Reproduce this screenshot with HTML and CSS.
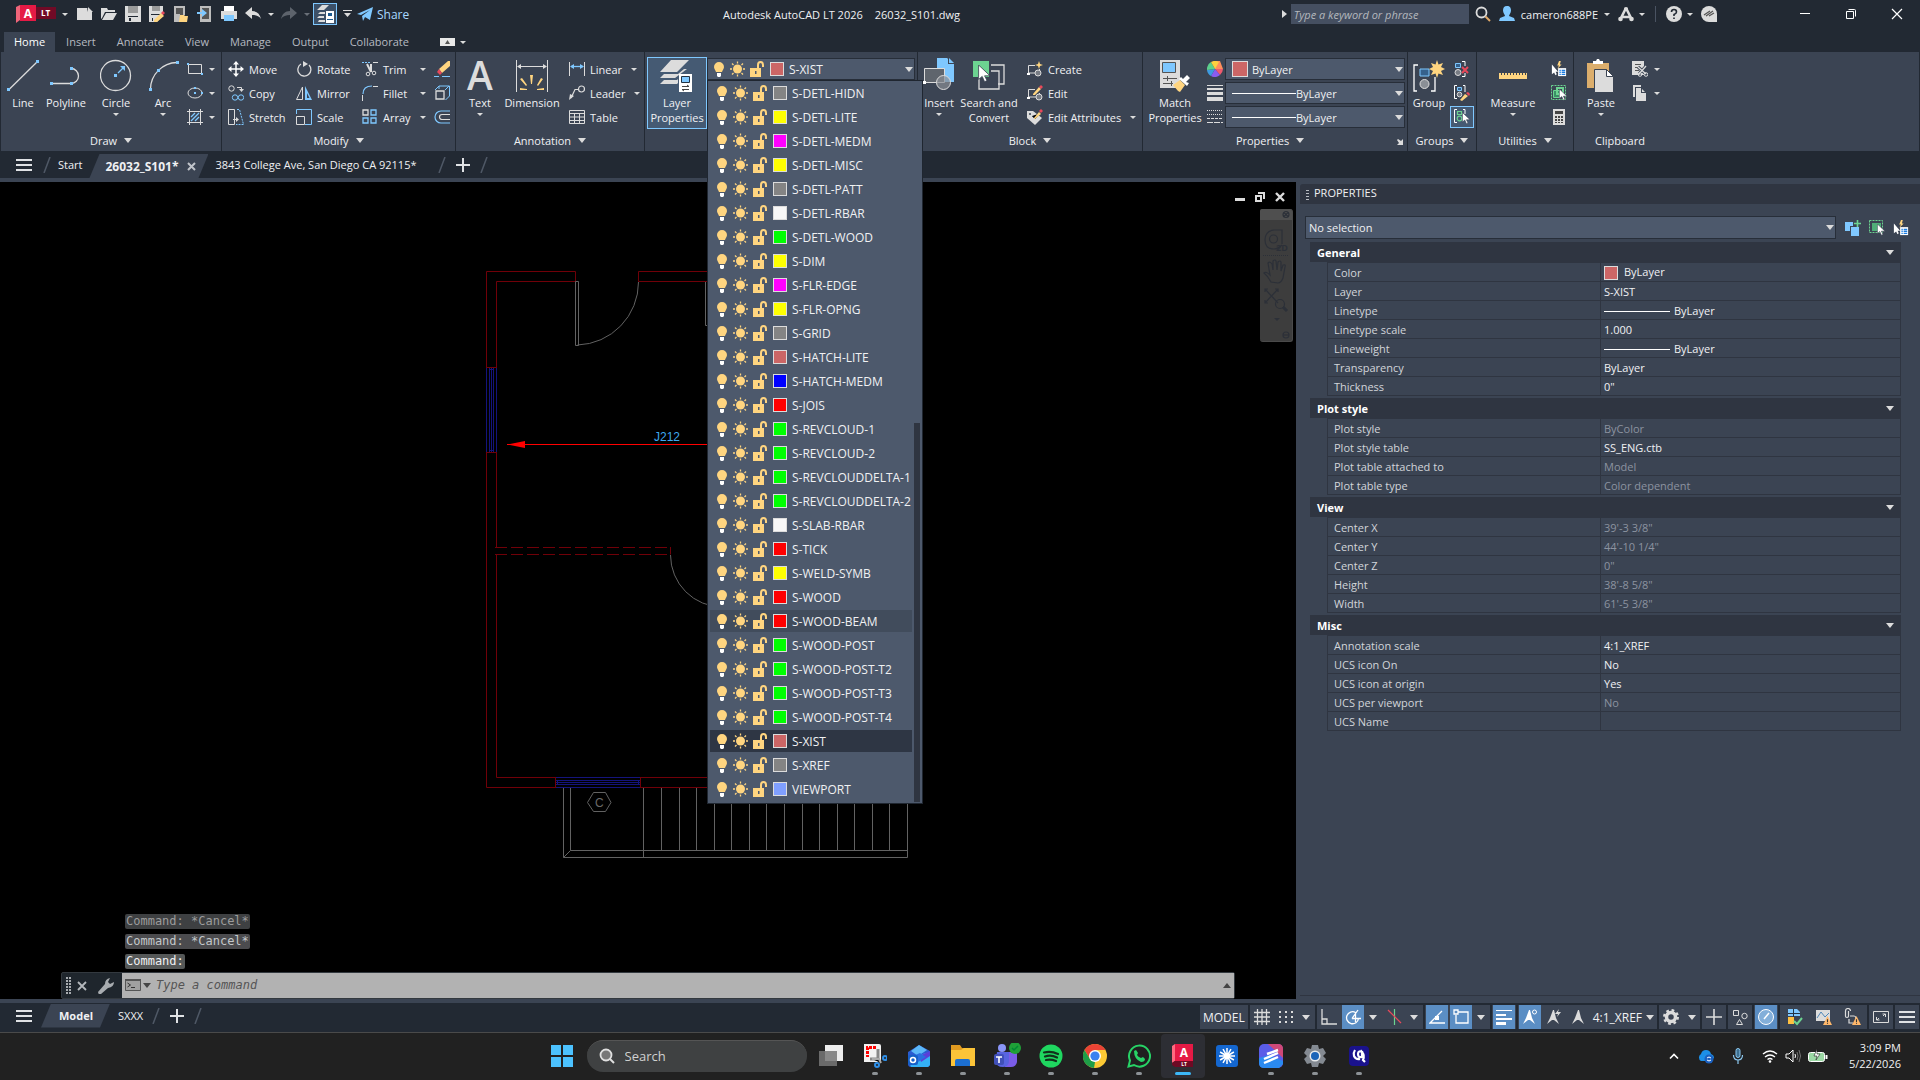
FILE: index.html
```html
<!DOCTYPE html>
<html lang="en">
<head>
<meta charset="utf-8">
<title>Autodesk AutoCAD LT 2026 - 26032_S101.dwg</title>
<meta name="viewport" content="width=device-width, initial-scale=1">
<link rel="stylesheet" href="styles.css">
</head>
<body>
<svg class="defs" aria-hidden="true">
  <symbol id="state" viewBox="0 0 52 18">
    <path fill="#ffd580" d="M7 2a5 5 0 0 0-5 5c0 2 1.500 3 2 5h6c.5-2 2-3 2-5a5 5 0 0 0-5-5z"/><path fill="#fff" d="M5 13h4v3l-1 1H6l-1-1z"/>
    <circle cx="25.500" cy="9" r="4.500" fill="#ffd580"/><path stroke="#ffd580" stroke-width="1.300" d="M25.500 1.500v2M25.500 14.500v2M18 9h2M31 9h2M20 3.500l1.500 1.500M29.500 13l1.500 1.500M31 3.500L29.500 5M21.500 13L20 14.500"/>
    <path fill="#ffd580" d="M38 8h11v9H38z"/><path fill="none" stroke="#ffd580" stroke-width="2" d="M46 8V5q0-3 2.500-3T51 5v2"/><path fill="#4d596c" d="M43 11h1.500v3H43z"/>
  </symbol>
  <symbol id="cursor" viewBox="0 0 10 15"><path fill="#fff" stroke="#3b4453" stroke-width=".7" d="M.5 0v12l3-2.500 2 4.500 2-1-2-4H10z"/></symbol>
  <symbol id="quick" viewBox="0 0 18 18"><path fill="#ffd580" d="M9 0L7 5h2L7 9l5-5h-2l1-4z"/><path fill="#fff" d="M8 8h9v9H8z"/><path stroke="#1c7de0" stroke-width="1.500" d="M9.500 10.500h1.500M12 10.500h4M9.500 12.700h1.500M12 12.700h4M9.500 15h1.500M12 15h4"/><path fill="#fff" d="M1 4v11l2.500-2 1.500 3 1.500-1-1.300-3H8z"/></symbol>
  <symbol id="warn" viewBox="0 0 10 10"><path fill="#ffb86b" d="M5 0l5 10H0z"/><path stroke="#333" stroke-width="1.200" d="M5 3.500V7M5 8v1"/></symbol>
</svg>

<header class="titlebar">
  <div class="quick-access">
    <button class="app-menu" aria-label="Application menu">
      <svg width="42" height="18" viewBox="0 0 42 18"><path fill="#f0657a" d="M0 2l4-2v15l-4 3z"/><path fill="#e51a45" d="M4 0h16v16H4z"/><path fill="#700a26" d="M20 2h20v12H20z"/><text x="12" y="13" text-anchor="middle" class="logo-a">A</text><text x="29.500" y="11" text-anchor="middle" class="logo-lt">LT</text></svg>
      <i class="caret"></i>
    </button>
    <button aria-label="New"><svg width="18" height="18"><path fill="#dcdcdc" d="M1 3h10l5 4v8H1z"/><path fill="#222933" d="M11 3l1 4h4z"/><path fill="#dcdcdc" d="M12 2l5 5h-5z"/></svg></button>
    <button aria-label="Open"><svg width="18" height="18"><path fill="#dcdcdc" d="M1 3h6l1 2h7v2H5l-3 6-1 1zM6 8h11l-4 7H2z"/></svg></button>
    <button aria-label="Save"><svg width="18" height="18"><path fill="#dcdcdc" d="M1 1h16v16H1z"/><path fill="#9a9a9a" d="M4 1h10v7H4z"/><path fill="#222933" d="M4 11h10v1H4zM5 13h2v3H5z"/></svg></button>
    <button aria-label="Save as"><svg width="18" height="18"><path fill="#dcdcdc" d="M1 1h14v9l-6 7H1z"/><path fill="#9a9a9a" d="M4 1h8v5H4z"/><path fill="#222933" d="M3 9h9v1H3zM4 13h1v3H4z"/><path fill="#ffd580" d="M6 15l7-7 3 3-7 6H6z"/><path fill="#e8485a" d="M13 8l2-2 2 2-2 2z"/></svg></button>
    <button aria-label="Open from web and mobile"><svg width="18" height="18"><path fill="#bdbdbd" d="M2 1h11v9H2z"/><path fill="#555" d="M4 3h7v8H4z"/><path fill="#bdbdbd" d="M2 9h6v8H2z"/><path fill="#ffd580" d="M8 10h4l1 1h3l-1 6H7z"/></svg></button>
    <button aria-label="Save to web and mobile"><svg width="18" height="18"><path fill="#bdbdbd" d="M4 1h11v16H4z"/><path fill="#555" d="M6 3h7v11H6z"/><path fill="#7fc8ff" d="M1 7h5V4l5 4-5 4V9H1z"/></svg></button>
    <button aria-label="Plot"><svg width="18" height="18"><path fill="#fff" d="M4 1h10v5H4z"/><path fill="#dcdcdc" d="M1 6h16v8H1z"/><path fill="#7fc8ff" d="M4 10h10v6H4z"/></svg></button>
    <button aria-label="Undo"><svg width="18" height="18"><path fill="#dcdcdc" d="M1 8l7-6v4c5 0 8 3 9 8-2-3-5-4-9-4v4z"/></svg></button>
    <button class="narrow" aria-label="Undo list"><i class="caret"></i></button>
    <button aria-label="Redo"><svg width="18" height="18"><path fill="#5d636c" d="M17 8l-7-6v4C5 6 2 9 1 14c2-3 5-4 9-4v4z"/></svg></button>
    <button class="narrow dim" aria-label="Redo list"><i class="caret"></i></button>
    <button class="on" aria-label="Layer properties"><svg width="18" height="18"><path fill="#dcdcdc" d="M6 0h7L8 5H1zM4 7h5v2H2zM3 11h5v2H1zM3 15h6v2H2z"/><path fill="#fff" d="M10 6h8v12h-8z"/><path fill="#1c5a90" d="M12 8h4v3h-4zM11 14h6v1h-6z"/></svg></button>
    <button class="narrow" aria-label="Customize toolbar"><svg width="9" height="10"><path fill="#dcdcdc" d="M0 1h9v1H0zM1 4h7l-3.500 4z"/></svg></button>
    <button class="share"><svg width="16" height="16"><path fill="#7fc8ff" d="M0 8l16-7-3 13-5-3-2 4-1-5 8-6-9 5z"/></svg><span>Share</span></button>
  </div>
  <h1 class="title"><span>Autodesk AutoCAD LT 2026</span><span>26032_S101.dwg</span></h1>
  <div class="account">
    <i class="caret right"></i>
    <input class="keyword" type="text" aria-label="Search help" placeholder="Type a keyword or phrase">
    <button aria-label="Search"><svg width="16" height="16"><circle cx="6.500" cy="6.500" r="5" fill="none" stroke="#dcdcdc" stroke-width="1.800"/><path stroke="#e0a868" stroke-width="2" d="M10.500 10.500L15 15"/></svg></button>
    <button class="user"><svg width="16" height="16"><path fill="#7fc8ff" d="M8 0c3 0 4 2 4 4.500S10 9 10 10l5 2 1 3H0l1-3 5-2c0-1-2-3-2-5.500S5 0 8 0z"/></svg><span>cameron688PE</span><i class="caret"></i></button>
    <button aria-label="Autodesk App Store"><svg width="16" height="16"><path fill="none" stroke="#dcdcdc" stroke-width="2.600" d="M8 2L2.500 13M8 2l5.500 11M4 11h8"/><circle cx="8" cy="3" r="2" fill="#dcdcdc"/><circle cx="2.500" cy="13" r="2.300" fill="#dcdcdc"/><circle cx="13.500" cy="13" r="2.300" fill="#dcdcdc"/></svg><i class="caret"></i></button>
    <button class="help" aria-label="Help"><svg width="16" height="16"><circle cx="8" cy="8" r="8" fill="#dcdcdc"/><path fill="none" stroke="#222933" stroke-width="1.600" d="M5.500 6q0-2.500 2.500-2.500T10.500 6Q10.500 7.500 8 8.500V10M8 11.500V13"/></svg><i class="caret"></i></button>
    <button aria-label="Assistant"><svg width="16" height="16"><path fill="#dcdcdc" d="M8 0a8 8 0 0 1 8 8v8H8A8 8 0 0 1 8 0z"/><path stroke="#555" stroke-width="1.300" d="M3 9l6-4M5 10l7-5M8 10l5-3"/></svg></button>
    <div class="window-buttons">
      <button aria-label="Minimize"><svg width="12" height="12"><path stroke="#fff" d="M1 5.500h10"/></svg></button>
      <button aria-label="Restore"><svg width="12" height="12"><path fill="none" stroke="#fff" d="M1.500 3.500h7v7h-7zM3.500 1.500h6q1 0 1 1v6"/></svg></button>
      <button aria-label="Close"><svg width="12" height="12"><path stroke="#fff" stroke-width="1.200" d="M1 1l10 10M11 1L1 11"/></svg></button>
    </div>
  </div>
</header>

<nav class="ribbon-tabs">
  <a href="#home" class="active">Home</a><a href="#insert">Insert</a><a href="#annotate">Annotate</a><a href="#view">View</a><a href="#manage">Manage</a><a href="#output">Output</a><a href="#collaborate">Collaborate</a>
  <button class="minimize-ribbon" aria-label="Minimize ribbon"><svg width="15" height="8"><path fill="#e8e8e8" d="M0 0h15v8H0z"/><path fill="#555" d="M5 6l2.500-4L10 6z"/></svg><i class="caret"></i></button>
</nav>

<main>
<section class="ribbon" id="home">
  <div class="panel draw">
    <div class="tools">
      <button class="big w42"><svg width="32" height="36"><path stroke="#dcdcdc" stroke-width="1.300" d="M1.500 33l29-28.500"/><path fill="#7fc8ff" d="M0 31h3v3H0zM29 3h3v3h-3z"/></svg><span>Line</span></button>
      <button class="big w44"><svg width="32" height="36"><path fill="none" stroke="#dcdcdc" stroke-width="1.300" d="M1 26.500h20a7.500 7.500 0 0 0 0-15"/><path fill="#7fc8ff" d="M0 25h3v3H0zM20 25h3v3h-3zM20 10h3v3h-3z"/></svg><span>Polyline</span></button>
      <button class="big w56"><svg width="32" height="36"><circle cx="15.500" cy="18.500" r="15" fill="none" stroke="#dcdcdc" stroke-width="1.300"/><path stroke="#7fc8ff" stroke-width="1.300" d="M18 16l6-6"/><path fill="#7fc8ff" d="M14 17h3v3h-3zM25 9v5l-5-5z"/></svg><span>Circle</span><i class="caret"></i></button>
      <button class="big w38"><svg width="32" height="36"><path fill="none" stroke="#dcdcdc" stroke-width="1.300" d="M3.500 32A27 27 0 0 1 30 5.500"/><path fill="#7fc8ff" d="M2 31h3v3H2zM10 12h3v3h-3zM29 4h3v3h-3z"/></svg><span>Arc</span><i class="caret"></i></button>
      <div class="small-col icons-only">
        <button aria-label="Rectangle"><svg width="16" height="16"><path fill="none" stroke="#dcdcdc" d="M1.500 3.500h13v9h-13z"/><path fill="#7fc8ff" d="M0 2h2v2H0zM14 12h2v2h-2z"/></svg><i class="caret"></i></button>
        <button aria-label="Ellipse"><svg width="16" height="16"><ellipse cx="8" cy="8" rx="7" ry="5" fill="none" stroke="#dcdcdc"/><path fill="#7fc8ff" d="M7 2h2v2H7zM7 7h2v2H7zM14 7h2v2h-2z"/></svg><i class="caret"></i></button>
        <button aria-label="Hatch"><svg width="16" height="16"><path stroke="#dcdcdc" d="M0 2.500h16M0 13.500h16M2.500 0v16M13.500 0v16"/><path stroke="#7fc8ff" stroke-width="1.300" d="M4 8l4-4M4 12l8-8M8 12l4-4"/></svg><i class="caret"></i></button>
      </div>
    </div>
    <div class="caption">Draw<i class="caret wide"></i></div>
  </div>

  <div class="panel modify">
    <div class="tools">
      <div class="small-col w68">
        <button><svg width="16" height="16"><path stroke="#fff" stroke-width="1.500" d="M8 2v12M2 8h12"/><path fill="#fff" d="M8 0l3 3.500H5zM8 16l3-3.500H5zM0 8l3.500-3v6zM16 8l-3.500-3v6z"/></svg>Move</button>
        <button><svg width="16" height="16"><circle cx="3.500" cy="3.500" r="2.700" fill="none" stroke="#dcdcdc"/><path fill="none" stroke="#dcdcdc" d="M9 2.500h4.500V5"/><path fill="#dcdcdc" d="M11 4h5l-2.500 3z"/><g fill="none" stroke="#7fc8ff"><circle cx="7" cy="12.500" r="2.700"/><circle cx="13" cy="12.500" r="2.700"/></g></svg>Copy</button>
        <button><svg width="16" height="16"><path fill="none" stroke="#dcdcdc" d="M.5.500h6v15h-6zM5 10.500h5"/><path fill="#dcdcdc" d="M8 8l3 2.500L8 13z"/><path fill="none" stroke="#7fc8ff" stroke-dasharray="2 1" d="M9 .5h2.500l4 15H8"/></svg>Stretch</button>
      </div>
      <div class="small-col w66">
        <button><svg width="16" height="16"><path fill="none" stroke="#dcdcdc" stroke-width="1.300" d="M5 3a6.500 6.500 0 1 0 8 1"/><path fill="#dcdcdc" d="M7 0l5 3-5 3z"/></svg>Rotate</button>
        <button><svg width="16" height="16"><path fill="none" stroke="#dcdcdc" d="M6.500 2v12.500h-6z"/><path fill="#7fc8ff" d="M9 1l7 14H9z"/><path fill="#3b4453" d="M11 8l2.500 5H11z"/></svg>Mirror</button>
        <button><svg width="16" height="16"><path fill="none" stroke="#7fc8ff" d="M.5 5V.500h15v15H9"/><path fill="none" stroke="#dcdcdc" d="M.5 7.500h8v8h-8z"/></svg>Scale</button>
      </div>
      <div class="small-col w68 split">
        <div><button><svg width="16" height="16"><path stroke="#7fc8ff" stroke-dasharray="2 1" d="M0 1.500h9"/><path stroke="#dcdcdc" d="M11 1.500h5"/><path stroke="#dcdcdc" stroke-width="2" d="M5 3l4 8M9 3v8"/><circle cx="6" cy="13" r="1.800" fill="none" stroke="#dcdcdc"/><circle cx="12" cy="12" r="1.800" fill="none" stroke="#dcdcdc"/></svg>Trim</button><button aria-label="Trim options"><i class="caret"></i></button></div>
        <div><button><svg width="16" height="16"><path fill="none" stroke="#7fc8ff" stroke-width="1.200" d="M1 9q0-8 9-8"/><path stroke="#dcdcdc" d="M11 1.500h5M.5 10v6"/></svg>Fillet</button><button aria-label="Fillet options"><i class="caret"></i></button></div>
        <div><button><svg width="16" height="16"><path fill="none" stroke="#dcdcdc" stroke-width="1.300" d="M1 1h5v5H1z"/><path fill="none" stroke="#7fc8ff" stroke-width="1.300" d="M9 1h5v5H9zM1 9h5v5H1zM9 9h5v5H9z"/></svg>Array</button><button aria-label="Array options"><i class="caret"></i></button></div>
      </div>
      <div class="small-col">
        <button aria-label="Erase"><svg width="16" height="16"><path fill="#ffd580" d="M14 0h2v5l-8 7-3-4z"/><path fill="#e8485a" d="M5 8l3 4-2 2-3-3z"/><path stroke="#7fc8ff" d="M0 15.500h5M8 15.500h8"/></svg></button>
        <button aria-label="Explode"><svg width="16" height="16"><path fill="none" stroke="#7fc8ff" d="M1 5l4-4h10.500v10l-4 4M5 1v3M11 5l4-4"/><path fill="none" stroke="#dcdcdc" stroke-width="1.300" d="M2 6h8v8H2z"/></svg></button>
        <button aria-label="Offset"><svg width="16" height="16"><path fill="none" stroke="#7fc8ff" stroke-width="1.200" d="M16 2H7a6 6 0 0 0 0 12h9"/><path fill="none" stroke="#dcdcdc" stroke-width="1.200" d="M16 5.500H8a2.500 2.500 0 0 0 0 5h8"/></svg></button>
      </div>
    </div>
    <div class="caption">Modify<i class="caret wide"></i></div>
  </div>

  <div class="panel annotation">
    <div class="tools">
      <button class="big w40"><svg width="32" height="36"><text x="16" y="33" text-anchor="middle" class="icon-a">A</text></svg><span>Text</span><i class="caret"></i></button>
      <button class="big w64"><svg width="32" height="36"><path stroke="#dcdcdc" d="M.5 3v32M31.500 3v32M2 9.500h28"/><path fill="#dcdcdc" d="M1 9.500L5 7v5zM31 9.500L27 7v5z"/><path fill="#ffd580" d="M14 18h3l-1 9h-1zM4 22l2-1 5 7-1 1zM27 22l-2-1-4 7 1 1zM4 31l7 1v1H4zM28 31l-7 1v1h7z"/></svg><span>Dimension</span></button>
      <div class="small-col">
        <div><button><svg width="16" height="16"><path stroke="#dcdcdc" d="M.5 1v14M15.500 1v14"/><path stroke="#7fc8ff" stroke-width="1.300" d="M2 5.500h12"/><path fill="#7fc8ff" d="M1 5.500L5 3v5zM15 5.500L11 3v5z"/></svg>Linear</button><button class="opt" aria-label="Linear options"><i class="caret"></i></button></div>
        <div><button><svg width="16" height="16"><circle cx="12.500" cy="4" r="3" fill="none" stroke="#dcdcdc" stroke-width="1.200"/><path fill="none" stroke="#dcdcdc" stroke-width="1.200" d="M9.500 4.500H6L2 13"/><path fill="#dcdcdc" d="M0 15l1-6 4 2z"/></svg>Leader</button><button class="opt" aria-label="Leader options"><i class="caret"></i></button></div>
        <button><svg width="16" height="16"><path fill="none" stroke="#dcdcdc" d="M.5 1.500h15v13H.5zM0 4.500h16M0 8h16M0 11.500h16M5.500 4v10M10.500 4v10"/></svg>Table</button>
      </div>
    </div>
    <div class="caption">Annotation<i class="caret wide"></i></div>
  </div>

  <div class="panel layers">
    <div class="tools">
      <button class="big pressed"><svg width="34" height="36"><path fill="#dcdcdc" d="M11 2h18L17 14H0zM4 16h14l6-5h3L15 20H0zM4 22h13l1-1v4l-1 1H0z"/><path fill="#fff" d="M19 16h13v18H19z"/><path fill="#7fc8ff" stroke="#234" d="M21.500 18.500h8v6h-8z"/><path fill="none" stroke="#444" d="M22 28.500h7l-2-1.500M29 31.500h-7l2 1.500"/></svg><span>Layer<br>Properties</span></button>
      <div class="layer-picker">
        <div class="combo"><svg class="state"><use href="#state"/></svg><i class="swatch rose"></i><select aria-label="Current layer"><option>S-XIST</option></select><i class="caret wide"></i></div>
        <ul class="layer-menu" aria-label="Layers">
          <li><svg class="state"><use href="#state"/></svg><i class="swatch gray"></i>S-DETL-HIDN</li>
          <li><svg class="state"><use href="#state"/></svg><i class="swatch yellow"></i>S-DETL-LITE</li>
          <li><svg class="state"><use href="#state"/></svg><i class="swatch magenta"></i>S-DETL-MEDM</li>
          <li><svg class="state"><use href="#state"/></svg><i class="swatch yellow"></i>S-DETL-MISC</li>
          <li><svg class="state"><use href="#state"/></svg><i class="swatch gray"></i>S-DETL-PATT</li>
          <li><svg class="state"><use href="#state"/></svg><i class="swatch white"></i>S-DETL-RBAR</li>
          <li><svg class="state"><use href="#state"/></svg><i class="swatch green"></i>S-DETL-WOOD</li>
          <li><svg class="state"><use href="#state"/></svg><i class="swatch yellow"></i>S-DIM</li>
          <li><svg class="state"><use href="#state"/></svg><i class="swatch magenta"></i>S-FLR-EDGE</li>
          <li><svg class="state"><use href="#state"/></svg><i class="swatch yellow"></i>S-FLR-OPNG</li>
          <li><svg class="state"><use href="#state"/></svg><i class="swatch gray"></i>S-GRID</li>
          <li><svg class="state"><use href="#state"/></svg><i class="swatch rose"></i>S-HATCH-LITE</li>
          <li><svg class="state"><use href="#state"/></svg><i class="swatch blue"></i>S-HATCH-MEDM</li>
          <li><svg class="state"><use href="#state"/></svg><i class="swatch red"></i>S-JOIS</li>
          <li><svg class="state"><use href="#state"/></svg><i class="swatch green"></i>S-REVCLOUD-1</li>
          <li><svg class="state"><use href="#state"/></svg><i class="swatch green"></i>S-REVCLOUD-2</li>
          <li><svg class="state"><use href="#state"/></svg><i class="swatch green"></i>S-REVCLOUDDELTA-1</li>
          <li><svg class="state"><use href="#state"/></svg><i class="swatch green"></i>S-REVCLOUDDELTA-2</li>
          <li><svg class="state"><use href="#state"/></svg><i class="swatch white"></i>S-SLAB-RBAR</li>
          <li><svg class="state"><use href="#state"/></svg><i class="swatch red"></i>S-TICK</li>
          <li><svg class="state"><use href="#state"/></svg><i class="swatch yellow"></i>S-WELD-SYMB</li>
          <li><svg class="state"><use href="#state"/></svg><i class="swatch red"></i>S-WOOD</li>
          <li class="hover"><svg class="state"><use href="#state"/></svg><i class="swatch red"></i>S-WOOD-BEAM</li>
          <li><svg class="state"><use href="#state"/></svg><i class="swatch green"></i>S-WOOD-POST</li>
          <li><svg class="state"><use href="#state"/></svg><i class="swatch green"></i>S-WOOD-POST-T2</li>
          <li><svg class="state"><use href="#state"/></svg><i class="swatch green"></i>S-WOOD-POST-T3</li>
          <li><svg class="state"><use href="#state"/></svg><i class="swatch green"></i>S-WOOD-POST-T4</li>
          <li class="current"><svg class="state"><use href="#state"/></svg><i class="swatch rose"></i>S-XIST</li>
          <li><svg class="state"><use href="#state"/></svg><i class="swatch gray"></i>S-XREF</li>
          <li><svg class="state"><use href="#state"/></svg><i class="swatch periwinkle"></i>VIEWPORT</li>
        </ul>
      </div>
    </div>
  </div>

  <div class="panel block">
    <div class="tools">
      <button class="big w40"><svg width="32" height="36"><path fill="#7fc8ff" d="M14 1h10l7 6v18H14z"/><path fill="#3b4453" d="M25 0h7v7h-7z"/><path fill="#7fc8ff" d="M26 1l5 5h-5z"/><path fill="#5f656d" stroke="#dcdcdc" d="M1.500 11.500h20v14h-20z"/><circle cx="20.500" cy="25.500" r="7" fill="#8a8f96" fill-opacity=".7" stroke="#dcdcdc"/><path fill="#fff" d="M0 24h3v3H0z"/></svg><span>Insert</span><i class="caret"></i></button>
      <button class="big w60"><svg width="32" height="36"><path fill="none" stroke="#dcdcdc" stroke-width="1.300" d="M18 8h13v19h-6M6 20v12h20V14h-8"/><path fill="#6cd391" d="M0 4h16v16H0z"/><use href="#cursor" x="5" y="8" width="12" height="18"/></svg><span>Search and<br>Convert</span></button>
      <div class="small-col">
        <button><svg width="16" height="16"><path fill="none" stroke="#dcdcdc" d="M12.500 8v4h-11V4.500H8"/><circle cx="11" cy="12" r="3" fill="#777c84" stroke="#dcdcdc"/><path fill="#fff" d="M0 12h3v2H0z"/><path fill="#ffd580" d="M12 0l1 3 3 1-3 1-1 3-1-3-3-1 3-1z"/></svg>Create</button>
        <button><svg width="16" height="16"><path fill="none" stroke="#dcdcdc" d="M12.500 8v4h-11V4.500H8"/><circle cx="12" cy="12" r="3" fill="#777c84" stroke="#dcdcdc"/><path fill="#fff" d="M0 12h3v2H0z"/><path fill="#ffd580" d="M6 9l6-7 2 2-6 6H6z"/><path fill="#e8485a" d="M12 2l2-2 2 2-2 2z"/></svg>Edit</button>
        <div><button><svg width="16" height="16"><path fill="#dcdcdc" d="M0 2h6l9 7-7 7-8-7z"/><circle cx="3" cy="5" r="1" fill="#3b4453"/><path stroke="#3b4453" d="M5 7l3 3 6-6"/><path fill="#ffd580" d="M7 9l5-6 2 2-6 5H7z"/><path fill="#e8485a" d="M12 2l2-2 2 2-2 2z"/></svg>Edit Attributes</button><button class="opt" aria-label="Edit attributes options"><i class="caret"></i></button></div>
      </div>
    </div>
    <div class="caption">Block<i class="caret wide"></i></div>
  </div>

  <div class="panel props">
    <div class="tools">
      <button class="big w56"><svg width="32" height="36"><path fill="#dcdcdc" d="M1 3h20v28H1z"/><path fill="#7fc8ff" stroke="#555" d="M3.500 5.500h13v10h-13z"/><path stroke="#555" d="M4 21.500h14M4 26.500h10M8.500 19v5M12.500 24v5"/><path fill="#ffd580" d="M14 28l7-5 5 5-5 7-2-1z"/><path fill="#fff" d="M20 22l2-2 2 2 4-4 3 3-4 4 3 1-2 3z"/></svg><span>Match<br>Properties</span></button>
      <div class="small-col">
        <button aria-label="Color"><svg width="16" height="16"><path fill="#ffc04d" d="M8 8V0l6 3z"/><path fill="#ff8e5c" d="M8 8V0h5l3 8z"/><path fill="#f05a6e" d="M8 8h8a8 8 0 0 1-3 6z"/><path fill="#8a5cf0" d="M8 8l5 6a8 8 0 0 1-9 1z"/><path fill="#3d9be0" d="M8 8l-4 7a8 8 0 0 1-4-6z"/><path fill="#5cd08c" d="M8 8L0 9a8 8 0 0 1 4-8z"/><path fill="#ffd040" d="M8 8L4 1a8 8 0 0 1 8 0z"/></svg></button>
        <button aria-label="Lineweight"><svg width="16" height="16"><path fill="#dcdcdc" d="M0 0h16v1H0zM0 3h16v2H0zM0 7h16v3H0zM0 12h16v4H0z"/></svg></button>
        <button aria-label="Linetype"><svg width="16" height="16"><path stroke="#dcdcdc" stroke-dasharray="1 1" d="M0 1.500h16M0 5.500h16"/><path stroke="#dcdcdc" stroke-dasharray="3 1" d="M0 9.500h16"/><path stroke="#dcdcdc" stroke-dasharray="6 1" d="M0 13.500h16"/></svg></button>
      </div>
      <div class="combos">
        <div class="combo"><i class="swatch big-swatch rose"></i><select aria-label="Object color"><option>ByLayer</option></select><i class="caret wide"></i></div>
        <div class="combo"><i class="sample"></i><select aria-label="Lineweight"><option>ByLayer</option></select><i class="caret wide"></i></div>
        <div class="combo"><i class="sample"></i><select aria-label="Linetype"><option>ByLayer</option></select><i class="caret wide"></i></div>
      </div>
    </div>
    <div class="caption">Properties<i class="caret wide"></i><button class="launcher" aria-label="Properties palette"><svg width="6" height="6"><path fill="#dcdcdc" d="M6 0v6H0l2-2-2-3 1-1 3 2z"/></svg></button></div>
  </div>

  <div class="panel groups">
    <div class="tools">
      <button class="big w38"><svg width="32" height="36"><path fill="none" stroke="#fff" stroke-width="1.300" d="M5 8H1v26h3M18 34h4V20"/><path fill="#35618c" stroke="#7fc8ff" d="M7 12h9v7H7z"/><circle cx="11.500" cy="27" r="4.500" fill="#8a8f96" stroke="#dcdcdc"/><path fill="#ffd580" d="M24 3l1.500 4.500L30 6l-2 4 4 2-4 2 2 4-4.500-1.500L24 21l-1.500-4.500L18 18l2-4-4-2 4-2-2-4 4.500 1.500z"/></svg><span>Group</span></button>
      <div class="small-col w24">
        <button aria-label="Ungroup"><svg width="16" height="16"><path fill="#35618c" stroke="#7fc8ff" d="M1.500 2.500h5v4h-5z"/><circle cx="4" cy="11.500" r="3" fill="#777c84" stroke="#dcdcdc"/><path fill="none" stroke="#fff" d="M8 .5h3V5M11 12v3.500H8"/><path stroke="#e8485a" stroke-width="2" d="M8 6l6 6M14 6l-6 6"/></svg></button>
        <button aria-label="Group edit"><svg width="16" height="16"><path fill="none" stroke="#fff" d="M3 .5H.5v13H3M9 .5h2V7"/><path fill="#35618c" stroke="#7fc8ff" d="M3.500 2.500h4v3h-4z"/><circle cx="5.500" cy="9.500" r="2.300" fill="#777c84" stroke="#dcdcdc"/><path fill="#ffd580" d="M6 15l5-6 3 2-6 5z"/><path fill="#e8485a" d="M12 8l2-1 2 2-1 2z"/></svg></button>
        <button class="on" aria-label="Group selection on/off"><svg width="16" height="16"><path fill="none" stroke="#fff" d="M3 .5H.5v13H3M9 .5h2V5"/><path fill="none" stroke="#6cd391" stroke-width="1.200" d="M3.500 2.500h4v3h-4z"/><circle cx="5.500" cy="9.500" r="2.300" fill="none" stroke="#6cd391" stroke-width="1.200"/><use href="#cursor" x="8" y="3" width="8" height="13"/></svg></button>
      </div>
    </div>
    <div class="caption">Groups<i class="caret wide"></i></div>
  </div>

  <div class="panel utilities">
    <div class="tools">
      <button class="big w64"><svg width="32" height="36"><path fill="#ffd580" d="M2 16h28v6H2z"/><path stroke="#3b4453" d="M4.500 16v2M7.500 16v2M10.500 16v2M13.500 16v2M16.500 16v2M19.500 16v2M22.500 16v2M25.500 16v2M28.500 16v2"/></svg><span>Measure</span><i class="caret"></i></button>
      <div class="small-col">
        <button aria-label="Quick select"><svg width="16" height="16"><use href="#quick" width="16" height="16"/></svg></button>
        <button aria-label="Select all"><svg width="16" height="16"><path fill="none" stroke="#6cd391" stroke-dasharray="2 1" d="M.5.500h14v14H.5z"/><path fill="#3b8f66" stroke="#6cd391" d="M2.500 5.500h6v7h-6z"/><path fill="none" stroke="#6cd391" stroke-width="2" d="M6 3v6h6V3z"/><use href="#cursor" x="8" y="4" width="8" height="12"/></svg></button>
        <button aria-label="Quick calculator"><svg width="16" height="16"><path fill="#dcdcdc" d="M2 0h12v16H2z"/><path fill="#444" d="M4 2h8v3H4zM4 7h2v2H4zM7 7h2v2H7zM10 7h2v2h-2zM4 10h2v2H4zM7 10h2v2H7zM10 10h2v2h-2zM4 13h2v1H4zM7 13h2v1H7zM10 13h2v1h-2z"/></svg></button>
      </div>
    </div>
    <div class="caption">Utilities<i class="caret wide"></i></div>
  </div>

  <div class="panel clipboard">
    <div class="tools">
      <button class="big w44"><svg width="32" height="36"><path fill="#dcae6c" d="M2 6h22v25H2z"/><path fill="#fff" d="M8 7V4h3l1-2h2l1 2h3v3z"/><path fill="#dcdcdc" stroke="#3b4453" d="M9.500 12.500h12l7 7v16h-19z"/><path fill="#fff" stroke="#3b4453" d="M21.500 12.500l7 7h-7z"/></svg><span>Paste</span><i class="caret"></i></button>
      <div class="small-col icons-only">
        <button aria-label="Cut"><svg width="16" height="16"><path fill="#dcdcdc" d="M0 0h12v14H0z"/><path stroke="#555" d="M3 3.500h6M3 6.500h5M3 9.500h4"/><path stroke="#3b4453" stroke-width="3" d="M6 6l8 7M14 5l-7 8"/><path stroke="#dcdcdc" stroke-width="1.300" d="M6 6l8 7M14 5l-7 8"/><g fill="none" stroke="#dcdcdc"><circle cx="8" cy="13.500" r="1.800"/><circle cx="14" cy="13.500" r="1.800"/></g></svg><i class="caret"></i></button>
        <button aria-label="Copy clip"><svg width="16" height="16"><path fill="#dcdcdc" d="M1 0h8v2H3v10H1z"/><path fill="#dcdcdc" d="M4 3h5l5 5v8H4z"/><path fill="#3b4453" d="M9 2v6h5V7h-4V2z"/></svg><i class="caret"></i></button>
      </div>
    </div>
    <div class="caption">Clipboard</div>
  </div>
</section>

<nav class="file-tabs">
  <button class="menu" aria-label="File tab menu"><i></i></button><svg class="slash" width="8" height="16"><path stroke="#4f5866" stroke-width="1.500" d="M1 16L7 0"/></svg>
  <a href="#start" class="start">Start</a>
  <span class="file active"><a href="#s101">26032_S101*</a><button aria-label="Close tab"><svg width="9" height="9"><path stroke="#c0c4ca" stroke-width="2" d="M1 1l7 7M8 1L1 8"/></svg></button></span>
  <a href="#college" class="file">3843 College Ave, San Diego CA 92115*</a>
  <svg class="slash" width="8" height="16"><path stroke="#4f5866" stroke-width="1.500" d="M1 16L7 0"/></svg><button class="plus" aria-label="New tab"></button><svg class="slash" width="8" height="16"><path stroke="#4f5866" stroke-width="1.500" d="M1 16L7 0"/></svg>
</nav>

<div class="workspace">
  <section class="canvas">
    <svg class="plan" width="1296" height="817" viewBox="0 182 1296 817" aria-label="Floor plan">
      <g fill="none" stroke="#700008">
        <path d="M575.500 282v-10.500h-89V787.500H720M575.500 281.500h-79V367M720 271.500h-81.500v10H720M486 367.500h11M486 452.500h11M496.500 452v95.500H497M670.500 547v7.500M496.500 554v223.500H720"/>
        <path stroke-dasharray="12 4" d="M495 547.500h176M495 554.500h176"/>
      </g>
      <g fill="none" stroke="#14147c"><path d="M486.500 368v84M496.500 368v84M489.500 368v84M491.500 368v84M493.500 368v84M489 369.500h5M489 450.500h5"/><path d="M556 777.500h84M556 780.500h84M556 782.500h84M556 784.500h84M556 787.500h84M557.500 780v5M638.500 780v5"/></g>
      <path fill="none" stroke="#700008" d="M555.500 777v11M640.500 777v11"/>
      <g fill="none" stroke="#626262"><path d="M575.500 281.500h3v64h-3zM638.500 282A63 63 0 0 1 577.500 345M705.500 282v43.500h10M670.500 555A52 52 0 0 0 722.500 607"/>
      <path d="M563.500 788v69.500h344V788M570.500 788v62.500h337M563.500 857.500l7-7M643.500 788v69M661.500 788v62M679.500 788v62M696.500 788v62M714.500 788v62M731.500 788v62M749.500 788v62M766.500 788v62M784.500 788v62M802.500 788v62M819.500 788v62M837.500 788v62M854.500 788v62M872.500 788v62M889.500 788v62"/>
      <path d="M587.500 802.500l6-10h12l5.500 10-5.500 9h-12z"/></g>
      <path stroke="#f00" d="M520 444.500h200"/><path fill="#f00" d="M507 444h3l15-3v7l-15-3h-3z"/>
      <text x="654" y="441" class="joist">J212</text><text x="595" y="807" class="mark">C</text>
    </svg>
    <div class="view-buttons">
      <button aria-label="Minimize drawing"><svg width="10" height="10"><path fill="#dcdcdc" d="M0 6h10v3H0z"/></svg></button>
      <button aria-label="Restore drawing"><svg width="10" height="10"><path fill="none" stroke="#dcdcdc" stroke-width="2" d="M1 4h5v5H1zM3 1h6v6"/></svg></button>
      <button aria-label="Close drawing"><svg width="10" height="10"><path stroke="#dcdcdc" stroke-width="2.400" d="M1 1l8 8M9 1L1 9"/></svg></button>
    </div>
    <div class="nav-bar" aria-label="Navigation bar">
      <svg width="32" height="132"><path fill="#4f4f4f" d="M2 0h28q2 0 2 2v9H0V2q0-2 2-2z"/><g fill="none" stroke="#2c3038" stroke-width="1.200"><circle cx="26" cy="5.500" r="3"/><path d="M24 3.500l4 4M28 3.500l-4 4"/><path d="M22 36q-4 4-8 4-9 0-9-9t9-10h8v14"/><circle cx="13.500" cy="30" r="4"/><path stroke-dasharray="1 1" d="M3 46.500h26"/><path d="M11 73q-3-6-7-9 2-2 6 2l-2-12q2-2 4 1l1 6V52q2-2 3 0l1 9 1-8q2-2 3 0v9l2-6q3-1 2 2l-2 11q-2 5-5 5z"/><path d="M5 80l13 14M18 80L5 94M5 83v-3h3M15 80h3v3M5 91v3h3"/><circle cx="20" cy="95" r="4.500"/><path stroke-width="3" d="M23 98l4 4"/><circle cx="26" cy="126" r="3"/><path d="M23 126h6"/></g><path fill="#2c3038" d="M14 109h6l-3 3z"/><text x="16" y="42" class="two-d">2D</text></svg>
    </div>
    <div class="command">
      <ol><li>Command: *Cancel*</li><li>Command: *Cancel*</li><li>Command:</li></ol>
      <div class="command-line">
        <svg width="11" height="18"><path stroke="#a8acb0" stroke-width="2" stroke-dasharray="2 1" d="M2 0v18M5 0v18"/></svg>
        <button aria-label="Close command line"><svg width="10" height="10"><path stroke="#b4b8bc" stroke-width="1.800" d="M1 1l8 8M9 1L1 9"/></svg></button>
        <button aria-label="Customize"><svg width="16" height="16"><path fill="#a8acb0" d="M0 14l7-8q0-5 5-6l-2 4 2 2 4-2q0 5-6 6l-7 6-2 1z"/></svg></button>
        <label><svg width="16" height="13"><path fill="#a0a0a0" stroke="#555" d="M.5.500h15v11H.5z"/><path stroke="#555" stroke-width="2" d="M0 1h16"/><path fill="none" stroke="#333" d="M2.500 4l3 2-3 2M6 8.500h4"/></svg><i class="caret wide"></i><input type="text" aria-label="Command" placeholder="Type a command"><i class="caret up"></i></label>
      </div>
    </div>
  </section>

  <aside class="palette">
    <h2>PROPERTIES</h2>
    <div class="palette-body">
      <div class="selection">
        <div class="combo"><select aria-label="Selection"><option>No selection</option></select><i class="caret wide"></i></div>
        <button aria-label="Toggle PICKADD"><svg width="16" height="16"><path fill="#7fc8ff" d="M0 2h8v4H5v5H0z"/><path fill="#7fc8ff" d="M6 7h8v9H6z"/><path stroke="#6cd391" stroke-width="1.600" d="M12.500 0v7M9 3.500h7"/></svg></button>
        <button aria-label="Select objects"><svg width="16" height="16"><path fill="#4fae78" d="M3 3h9v8H3z"/><path fill="none" stroke="#6cd391" stroke-dasharray="2 1" d="M.5.500h13v12H.5z"/><use href="#cursor" x="8" y="4" width="8" height="12"/></svg></button>
        <button aria-label="Quick select"><svg width="16" height="16"><use href="#quick" width="16" height="16"/></svg></button>
      </div>
      <section><h3>General<i class="caret wide"></i></h3>
      <table>
        <tr><th scope="row">Color</th><td><i class="swatch rose"></i>ByLayer</td></tr>
        <tr><th scope="row">Layer</th><td>S-XIST</td></tr>
        <tr><th scope="row">Linetype</th><td><i class="sample"></i>ByLayer</td></tr>
        <tr><th scope="row">Linetype scale</th><td>1.000</td></tr>
        <tr><th scope="row">Lineweight</th><td><i class="sample"></i>ByLayer</td></tr>
        <tr><th scope="row">Transparency</th><td>ByLayer</td></tr>
        <tr><th scope="row">Thickness</th><td>0"</td></tr>
      </table></section>
      <section><h3>Plot style<i class="caret wide"></i></h3>
      <table>
        <tr><th scope="row">Plot style</th><td class="off">ByColor</td></tr>
        <tr><th scope="row">Plot style table</th><td>SS_ENG.ctb</td></tr>
        <tr><th scope="row">Plot table attached to</th><td class="off">Model</td></tr>
        <tr><th scope="row">Plot table type</th><td class="off">Color dependent</td></tr>
      </table></section>
      <section><h3>View<i class="caret wide"></i></h3>
      <table>
        <tr><th scope="row">Center X</th><td class="off">39'-3 3/8"</td></tr>
        <tr><th scope="row">Center Y</th><td class="off">44'-10 1/4"</td></tr>
        <tr><th scope="row">Center Z</th><td class="off">0"</td></tr>
        <tr><th scope="row">Height</th><td class="off">38'-8 5/8"</td></tr>
        <tr><th scope="row">Width</th><td class="off">61'-5 3/8"</td></tr>
      </table></section>
      <section><h3>Misc<i class="caret wide"></i></h3>
      <table>
        <tr><th scope="row">Annotation scale</th><td>4:1_XREF</td></tr>
        <tr><th scope="row">UCS icon On</th><td>No</td></tr>
        <tr><th scope="row">UCS icon at origin</th><td>Yes</td></tr>
        <tr><th scope="row">UCS per viewport</th><td class="off">No</td></tr>
        <tr><th scope="row">UCS Name</th><td></td></tr>
      </table></section>
    </div>
  </aside>
</div>
</main>

<div class="layout-bar">
  <nav class="layout-tabs">
    <button class="menu" aria-label="Layout menu"><i></i></button>
    <a href="#model" class="active">Model</a><a href="#sxxx">SXXX</a><svg class="slash" width="8" height="16"><path stroke="#4f5866" stroke-width="1.500" d="M1 16L7 0"/></svg><button class="plus" aria-label="New layout"></button><svg class="slash" width="8" height="16"><path stroke="#4f5866" stroke-width="1.500" d="M1 16L7 0"/></svg>
  </nav>
  <div class="status">
    <div class="grp"><button class="text">MODEL</button></div>
    <div class="grp"><button aria-label="Grid"><svg width="16" height="16"><path stroke="#dcdcdc" stroke-width="1.300" d="M3.500 0v16M8 0v16M12.500 0v16M0 3.500h16M0 8h16M0 12.500h16"/></svg></button><button aria-label="Snap"><svg width="16" height="16"><path stroke="#dcdcdc" stroke-width="2" stroke-dasharray="2 4" d="M1 3h14M1 8h14M1 13h14"/></svg></button><button class="drop" aria-label="Snap options"><i class="caret wide"></i></button></div>
    <div class="grp"><button aria-label="Ortho"><svg width="16" height="16"><path fill="none" stroke="#dcdcdc" stroke-width="1.300" d="M1 0v15h15M1 10h5v5"/></svg></button><button class="lit" aria-label="Polar tracking"><svg width="16" height="16"><path fill="none" stroke="#fff" stroke-width="1.300" d="M13.500 9.500a6 6 0 1 1-3-6M7 9.500h9M7 9.500L13 1M10.500 5v8"/></svg></button><button class="drop" aria-label="Polar options"><i class="caret wide"></i></button><button aria-label="Isometric drafting"><svg width="16" height="16"><path stroke="#6cd391" stroke-width="1.200" d="M8.500 0v16"/><path stroke="#e8485a" stroke-width="1.200" d="M2 1l13 13"/></svg></button><button class="drop" aria-label="Isometric options"><i class="caret wide"></i></button></div>
    <div class="grp"><button class="lit" aria-label="Object snap tracking"><svg width="16" height="16"><path fill="none" stroke="#fff" stroke-width="1.300" d="M13 2L1 14h15"/><path fill="#fff" d="M6 7h4v4H6z"/></svg></button><button class="lit" aria-label="Object snap"><svg width="16" height="16"><path fill="none" stroke="#fff" stroke-width="1.300" d="M5 3h10v11H3V6M1 1h4v4H1z"/></svg></button><button class="drop" aria-label="Object snap options"><i class="caret wide"></i></button></div>
    <div class="grp"><button class="lit" aria-label="Lineweight"><svg width="16" height="16"><path fill="#fff" d="M0 1h16v1H0zM0 5h10v2H0zM0 9h16v2H0zM0 13h10v3H0z"/></svg></button></div>
    <div class="grp"><button class="lit" aria-label="Annotation visibility"><svg width="16" height="16"><path fill="#fff" d="M7 1h1l2 8 3 6-5-4-2 0-5 4 3-6z"/><circle cx="12.500" cy="3" r="2" fill="none" stroke="#fff"/></svg></button><button aria-label="Auto scale"><svg width="16" height="16"><path fill="#dcdcdc" d="M7 1h1l2 8 3 6-5-4-2 0-5 4 3-6zM13 0l-4 5h3l-1 3 4-5h-3z"/></svg></button><button aria-label="Annotation scale"><svg width="16" height="16"><path fill="#dcdcdc" d="M8 1h1l2 8 3 6-5-4-2 0-5 4 3-6z"/></svg></button><button class="text">4:1_XREF<i class="caret wide"></i></button></div>
    <div class="grp"><button aria-label="Workspace"><svg width="16" height="16"><circle cx="8" cy="8" r="4.500" fill="none" stroke="#dcdcdc" stroke-width="3.500"/><circle cx="8" cy="8" r="6.800" fill="none" stroke="#dcdcdc" stroke-width="2.400" stroke-dasharray="2.700 2.700"/></svg></button><button class="drop" aria-label="Workspace options"><i class="caret wide"></i></button></div>
    <div class="grp"><button aria-label="Annotation monitor"><svg width="16" height="16"><path stroke="#dcdcdc" stroke-width="1.600" d="M8 0v16M0 8h16"/></svg></button></div>
    <div class="grp"><button aria-label="Isolate objects"><svg width="16" height="16"><path fill="none" stroke="#dcdcdc" d="M1.500 1.500h5v5h-5zM7.500 10.500l3 5h-6z"/><circle cx="12.500" cy="7" r="2.700" fill="none" stroke="#dcdcdc"/></svg></button></div>
    <div class="grp"><button class="lit" aria-label="Graphics performance"><svg width="18" height="18"><circle cx="9" cy="9" r="7.500" fill="#9fc4e8" fill-opacity=".6" stroke="#fff"/><path stroke="#fff" stroke-width="1.500" d="M7 11l5-6"/></svg></button></div>
    <div class="grp loose"><button aria-label="Trusted file"><svg width="18" height="18"><path fill="#7fc8ff" d="M2 1h9l3 3v4H2z"/><path stroke="#234" d="M2 5.500h12M7.500 1v8"/><path fill="#ffc040" d="M2 9h6v7H2z"/><path fill="none" stroke="#6cd391" stroke-width="2" d="M8 13l3 3 5-6"/></svg></button><button aria-label="Image warning"><svg width="18" height="18"><path fill="#dcdcdc" d="M1 2h14v11H1z"/><path fill="none" stroke="#5087b8" d="M2 10l4-6 4 5 4-4"/><use href="#warn" x="8" y="8" width="9" height="9"/></svg></button><button aria-label="Reference warning"><svg width="18" height="18"><path fill="none" stroke="#dcdcdc" stroke-width="1.200" d="M4.500 3v5a1.500 1.500 0 0 1-3 0V3a2.500 2.500 0 0 1 5 0M6 8h4q2 0 2 3M5 11v4h4"/><use href="#warn" x="8" y="8" width="9" height="9"/></svg></button></div>
    <div class="grp"><button aria-label="Clean screen"><svg width="16" height="16"><path fill="none" stroke="#dcdcdc" d="M.5 2.500h15v11H.5zM3.500 8v3h3M9.500 5h3v3M4 11l2-2M12 5l-2 2"/></svg></button></div>
    <div class="grp"><button class="menu" aria-label="Customization"><i></i></button></div>
  </div>
</div>

<footer class="taskbar">
  <div class="apps">
    <button aria-label="Start"><svg width="24" height="24"><path fill="#4cc2ff" d="M1 1h10v10H1zM13 1h10v10H13zM1 13h10v10H1zM13 13h10v10H13z"/></svg></button>
    <label class="find"><svg width="16" height="16"><circle cx="7" cy="7" r="5.500" fill="#777" stroke="#e0e0e0" stroke-width="1.800"/><path stroke="#e0e0e0" stroke-width="2" d="M11 11l4 4"/></svg><input type="search" aria-label="Search" placeholder="Search"></label>
    <button aria-label="Task view"><svg width="24" height="24"><path fill="#eee" d="M6 1h18v16H6z"/><path fill="#777" fill-opacity=".85" d="M0 7h18v15H0z"/></svg></button>
    <button class="run" aria-label="Snipping Tool"><svg width="24" height="24"><path fill="#f2f2f2" d="M1 0h15q2 0 2 2v16H1z"/><path fill="none" stroke="#f00" stroke-width="3" stroke-dasharray="3 1" d="M13 3.500H4.500V13"/><path fill="none" stroke="#888" stroke-width="3" d="M15 5v10H7"/><path stroke="#aaa" stroke-width="2" d="M9 15h7l2 4"/><g fill="none" stroke="#2e8fe8" stroke-width="2"><circle cx="22" cy="14" r="2"/><circle cx="14" cy="21" r="2"/></g></svg></button>
    <button class="run" aria-label="Outlook"><svg width="24" height="24"><path fill="#2a5bd0" d="M1 8L12 1l11 6v13q0 3-3 3H4q-3 0-3-3z"/><path fill="#5cb8f8" d="M4 7l8-6 8 5-9 6z"/><path fill="#34b0f5" d="M1 14l11-3 11-3v13l-2 2H4z"/><path fill="#5a3fd8" d="M12 12l11-5v5l-9 6z"/><path fill="#2a6fe0" d="M6 12l7-3 6 4-8 5z"/><rect x="1" y="11" width="10" height="10" rx="2" fill="#1560c8"/><circle cx="6" cy="16" r="2.500" fill="none" stroke="#fff" stroke-width="1.500"/></svg></button>
    <button class="run" aria-label="File Explorer"><svg width="26" height="24"><path fill="#e09a20" d="M1 1h9l2 3h12v5H1z"/><path fill="#fcc438" d="M1 6h10l3-2h11v18H1z"/><path fill="#1c6fd0" d="M5 22v-5q0-2 2-2h11q2 0 2 2v5z"/></svg></button>
    <button class="run" aria-label="Teams"><svg width="28" height="26"><circle cx="9" cy="5" r="4" fill="#8a95f8"/><path fill="#7a5ce8" d="M12 9h10q2 0 2 2v8q-1 5-6 5h-6z"/><path fill="#5864e0" d="M4 9h12v10q-1 5-6 5-7 0-7-6z"/><rect x="1" y="11" width="10" height="11" rx="2" fill="#4050b8"/><path stroke="#fff" stroke-width="1.600" d="M3 14h6M6 14v6"/><circle cx="22" cy="5" r="6" fill="#1fa038"/><path fill="none" stroke="#083" stroke-width="1.500" d="M19 5l2 2 4-4"/></svg></button>
    <button class="run" aria-label="Spotify"><svg width="24" height="24"><circle cx="12" cy="12" r="11.500" fill="#1fd760"/><path fill="none" stroke="#12301c" stroke-width="2.200" stroke-linecap="round" d="M5 8.500q7-2 14 1.500M6 12.500q6-2 12 1M7 16q5-1 10 1"/></svg></button>
    <button class="run" aria-label="Chrome"><svg width="24" height="24"><circle cx="12" cy="12" r="12" fill="#fcc934"/><path fill="#ea4335" d="M12 0a12 12 0 0 1 10.500 6H12L7 15 1.500 6A12 12 0 0 1 12 0z"/><path fill="#1e9e48" d="M1.500 6L7 15l5 3-1 6A12 12 0 0 1 1.500 6z"/><circle cx="12" cy="12" r="6" fill="#fff"/><circle cx="12" cy="12" r="4.600" fill="#3b82f0"/></svg></button>
    <button class="run" aria-label="WhatsApp"><svg width="24" height="24"><path fill="#202020" stroke="#27d366" stroke-width="2" d="M1.500 22.500l1.500-6a10.500 10.500 0 1 1 4 4.500z"/><path fill="#27d366" d="M7 7l2-1 2 3-1 2q1 2 4 3l2-1 2 2q0 3-4 3Q7 15 7 7z"/></svg></button>
    <button class="run now" aria-label="AutoCAD LT"><svg width="24" height="24"><path fill="#ff6a80" d="M1 2l3-2v17l-3 2z"/><path fill="#e51a45" d="M4 0h18v17H4z"/><path fill="#6e0a24" d="M4 17h18v6H4l-3-2v-2z"/><text x="13" y="13" text-anchor="middle" class="app-a">A</text><text x="13" y="22" text-anchor="middle" class="app-lt">LT</text></svg></button>
    <button aria-label="Asterisk app"><svg width="22" height="22"><rect width="22" height="22" rx="3" fill="#1467d0"/><path stroke="#fff" stroke-width="1.500" d="M11 3v16M3 11h16M7 4.100l8 13.800M15 4.100L7 17.900M4.100 7l13.800 8M4.100 15l13.800-8"/><circle cx="11" cy="11" r="2.500" fill="#fff"/></svg></button>
    <button class="run" aria-label="Stripes app"><svg width="24" height="24"><rect width="24" height="24" rx="5" fill="#5a5ce8"/><path fill="#d04878" d="M9 0h10q5 0 5 5v9z"/><path fill="#2a8af0" d="M0 14l10-3 14 6v3l-4 4H5q-5 0-5-5z"/><path stroke="#fff" stroke-width="2.400" d="M8 10l11-4M5 15l14-6M5 19l14-6"/></svg></button>
    <button class="run" aria-label="Settings"><svg width="24" height="24"><path fill="#848a92" d="M9 1h6l1 4 4-1 3 5-3 3 3 3-3 5-4-1-1 4H9l-1-4-4 1-3-5 3-3-3-3 3-5 4 1z"/><circle cx="12" cy="12" r="5.500" fill="#e8eaec"/><circle cx="12" cy="12" r="4" fill="#1c64b8"/></svg></button>
    <button class="run" aria-label="G app"><svg width="20" height="20"><rect width="20" height="20" rx="4" fill="#1a128c"/><path fill="none" stroke="#fff" stroke-width="2.200" d="M6 4q-2 3-1 6 2 4 6 3M14 6q-5-2-5 2t4 3V6q3 3 1 8l2 2"/></svg></button>
  </div>
  <div class="tray">
    <button aria-label="Hidden icons"><svg width="12" height="12"><path fill="none" stroke="#fff" stroke-width="1.600" d="M2 8.500l4-4 4 4"/></svg></button>
    <button aria-label="OneDrive"><svg width="16" height="16"><path fill="#1c8fe8" d="M3 13a4 4 0 0 1 0-7q1-4 5-4t5 4q3 1 3 4l-4 3z"/><circle cx="11" cy="11" r="4.500" fill="#1a60c0"/><path fill="none" stroke="#fff" d="M9 10q2-2 4 0M9 12q2 2 4 0"/></svg></button>
    <button aria-label="Microphone"><svg width="12" height="16"><rect x="4" y=".5" width="4" height="9" rx="2" fill="#3d6f90" stroke="#8cc8f0"/><path fill="none" stroke="#8cc8f0" stroke-width="1.200" d="M1.500 7q0 5 4.500 5t4.500-5M6 12v4"/></svg></button>
    <button class="system" aria-label="Network, volume, battery">
      <svg width="16" height="16"><path fill="none" stroke="#fff" stroke-width="1.400" d="M1 6q7-6 14 0M3 9q5-4 10 0M5.500 11.500q2.500-2 5 0"/><circle cx="8" cy="13.500" r="1.300" fill="#fff"/></svg>
      <svg width="16" height="16"><path fill="none" stroke="#fff" d="M1 6h3l4-4v12l-4-4H1z"/><path fill="none" stroke="#fff" d="M10 6q1 2 0 4"/><path fill="none" stroke="#777" d="M12 4q2 4 0 8M14 2q3 6 0 12"/></svg>
      <svg width="20" height="16"><rect x=".5" y="4.500" width="16" height="9" rx="2" fill="#9bd8a4" stroke="#fff"/><path stroke="#fff" stroke-width="2" d="M18.500 7v4"/><path fill="#fff" stroke="#202020" stroke-width=".6" d="M9 1L6 8h3l-1 4 4-6H9z"/></svg>
    </button>
    <div class="clock"><time>3:09 PM</time><time>5/22/2026</time></div>
  </div>
</footer>
</body>
</html>
```
FILE: styles.css
```css
:root {
  --dark: #222933;
  --panel: #3b4453;
  --field: #4d596c;
  --edge: #2f3541;
  --blue: #7fc8ff;
  --text: #f0f1f3;
}
* { box-sizing: border-box; }
body {
  margin: 0;
  min-height: 100vh;
  display: flex;
  flex-direction: column;
  background: var(--dark);
  color: var(--text);
  font: 11px/15px "Open Sans", "Noto Sans", sans-serif;
}
button, input, select { font: inherit; color: inherit; background: none; border: 0; padding: 0; margin: 0; }
button { display: flex; align-items: center; white-space: nowrap; }
a { color: inherit; text-decoration: none; }
h1, h2, h3, ul, ol { margin: 0; padding: 0; font: inherit; list-style: none; }
svg { display: block; flex: none; }
.defs { position: absolute; width: 0; height: 0; }
i { font-style: normal; }

.caret { flex: none; width: 0; height: 0; border: 3px solid transparent; border-top-color: #dcdcdc; border-bottom: 0; }
.caret.wide { border-width: 5px 4px 0; }
.caret.right { border: 4px solid transparent; border-left: 5px solid #dcdcdc; border-right: 0; }
.caret.up { border: 4px solid transparent; border-top: 0; border-bottom: 5px solid #444; }
.dim .caret { border-top-color: #6a7079; }

/* title bar */
.titlebar { display: flex; align-items: center; height: 32px; padding-bottom: 4px; }
.quick-access, .account { display: flex; align-items: center; }
.quick-access > button { width: 24px; height: 22px; justify-content: center; }
.quick-access > .narrow { width: 12px; }
.quick-access > .on { border: 1px solid var(--blue); background: #3c5068; margin-right: 4px; }
.quick-access > .app-menu { width: 62px; margin: 0 0 0 11px; gap: 4px; }
.quick-access > .share { width: auto; gap: 4px; margin-left: 4px; color: #a8d8ff; font-size: 12px; }
.logo-a { font: bold 12px "Open Sans", sans-serif; fill: #fff; }
.logo-lt { font: bold 8px "Open Sans", sans-serif; fill: #fff; }
.title { display: flex; gap: 12px; margin: 0 auto; white-space: nowrap; }
.account { padding-left: 8px; }
.account > button { padding: 0 4px; gap: 5px; }
.account > .user { gap: 6px; }
.keyword { width: 178px; height: 20px; margin: 0 2px 0 4px; padding: 0 3px; background: #454f61; font-style: italic; }
.keyword::placeholder { color: #b4b8be; opacity: 1; }
.account > .help { border-left: 1px solid #4a5362; margin-left: 6px; padding-left: 10px; }
.window-buttons { display: flex; margin-left: 61px; }
.window-buttons button { width: 46px; height: 20px; justify-content: center; }

.ribbon-tabs { display: flex; gap: 1px; height: 20px; padding-left: 4px; color: #b6bac1; }
.ribbon-tabs a { padding: 0 10px; line-height: 20px; }
.ribbon-tabs .active { background: var(--panel); color: #fff; }
.minimize-ribbon { margin-left: 20px; gap: 5px; }

/* ribbon */
main { flex: 1; display: flex; flex-direction: column; }
.ribbon { display: flex; height: 99px; margin: 0 1px; background: var(--panel); }
.panel { display: flex; flex-direction: column; flex: none; border-right: 1px solid var(--dark); }
.draw { width: 221px; }
.modify { width: 234px; }
.annotation { width: 189px; }
.layers { width: 273px; }
.block { width: 225px; }
.props { width: 265px; }
.groups { width: 69px; }
.utilities { width: 97px; }
.clipboard { flex: 1; border-right: 0; }
.tools { display: flex; height: 77px; padding: 5px 1px 0; }
.caption { position: relative; display: flex; justify-content: center; align-items: center; gap: 7px; height: 22px; }
.props .caption { padding-right: 10px; }
.clipboard .caption { width: 92px; }
.launcher { position: absolute; right: 4px; bottom: 6px; }
.big { flex-direction: column; height: 72px; line-height: 15px; text-align: center; }
.big svg { margin-bottom: 2px; }
.big .caret { margin-top: 3px; }
.icon-a { font: 600 39px "Open Sans", sans-serif; fill: #dcdcdc; }
.w24 { width: 24px; }
.w38 { width: 38px; }
.w40 { width: 40px; }
.w42 { width: 42px; }
.w44 { width: 44px; }
.w56 { width: 56px; }
.w60 { width: 60px; }
.w64 { width: 64px; }
.w66 { width: 66px; }
.w68 { width: 68px; }
.small-col { display: grid; grid-auto-rows: 24px; align-items: center; align-content: start; }
.small-col button { height: 22px; gap: 5px; }
.small-col > div { display: flex; gap: 9px; }
.icons-only button { gap: 6px; }
.split > div { justify-content: space-between; padding-right: 7px; }
.draw .small-col { margin-left: 5px; }
.modify .tools { padding-left: 6px; }
.modify .split + .small-col { margin-left: 4px; }
.annotation .tools { padding-left: 4px; }
.annotation .small-col { margin-left: 5px; }
.layers .tools { padding-left: 2px; }
.block .tools { padding-left: 1px; }
.block .small-col { margin-left: 8px; }
.props .tools { padding-left: 4px; }
.props .small-col { margin-left: 4px; }
.groups .tools { padding-left: 2px; }
.groups .w24 { margin-left: 2px; }
.groups .w24 button { width: 24px; justify-content: center; }
.groups .on { border: 1px solid var(--blue); background: #455a73; }
.utilities .tools { padding-left: 4px; }
.utilities .small-col { margin-left: 6px; }
.clipboard .tools { padding-left: 5px; }
.clipboard .small-col { margin-left: 9px; }

.pressed { width: 60px; border: 1px solid var(--blue); background: #455a73; }
.pressed svg { margin-bottom: 1px; }
.combos { display: flex; flex-direction: column; gap: 2px; margin: 1px 0 0 2px; width: 180px; }
.combo { display: flex; align-items: center; height: 22px; padding-right: 1px; border: 1px solid #272e39; background: var(--field); }
.combo select { flex: 1; appearance: none; min-width: 0; }
.combo .sample { width: 64px; margin-left: 6px; }
.swatch { flex: none; width: 14px; height: 14px; border: 1px solid #dcdcdc; }
.big-swatch { width: 16px; height: 16px; margin: 0 4px 0 6px; }
.sample { flex: none; height: 1px; background: #fff; }
.rose { background: #cc6666; }
.gray { background: #848484; }
.yellow { background: #ff0; }
.magenta { background: #f0f; }
.white { background: #f7f7f7; }
.green { background: #0f0; }
.blue { background: #00f; }
.red { background: #f00; }
.periwinkle { background: #7f9fff; }
.state { width: 52px; height: 18px; margin-right: 6px; }

.layer-picker { position: relative; width: 208px; margin-top: 1px; font-size: 12px; }
.layer-picker .combo { padding-left: 4px; }
.layer-picker select { padding-left: 5px; }
.layer-menu {
  position: absolute; z-index: 5; top: 22px; left: 0; width: 216px;
  padding: 1px 10px 1px 2px;
  border: 1px solid #1f2630;
  background: linear-gradient(var(--edge), var(--edge)) right 2px bottom 1px / 6px 379px no-repeat var(--field);
}
.layer-menu li { display: flex; align-items: center; height: 22px; margin-bottom: 2px; padding-left: 5px; white-space: nowrap; }
.layer-menu .swatch { margin-right: 5px; }
.layer-menu .hover { background: #414c5c; }
.layer-menu .current { background: #2e3644; }

/* file tabs */
.file-tabs, .layout-tabs { display: flex; align-items: center; }
.file-tabs { height: 31px; padding-left: 16px; border-bottom: 4px solid var(--panel); }
.menu i { width: 16px; height: 12px; border: solid #e0e2e5; border-width: 2px 0; background: linear-gradient(#e0e2e5, #e0e2e5) center / 100% 2px no-repeat; }
.plus { width: 14px; height: 14px; margin: 0 10px; background: linear-gradient(#e0e2e5, #e0e2e5) center / 100% 2px no-repeat, linear-gradient(#e0e2e5, #e0e2e5) center / 2px 100% no-repeat; }
.menu + .slash { margin-left: 11px; }
.start { margin: 0 7px; }
.file.active { display: flex; align-items: center; gap: 9px; height: 24px; align-self: flex-end; padding: 0 12px 0 16px; background: var(--panel); clip-path: polygon(10px 0, 100% 0, calc(100% - 10px) 100%, 0 100%); font-weight: bold; font-size: 12px; }
a.file { margin: 0 22px 0 7px; }

/* workspace */
.workspace { flex: 1; display: flex; }
.canvas { position: relative; flex: 1; overflow: hidden; background: #000; }
.plan { position: absolute; top: 0; left: 0; }
.joist { font: 12px "Liberation Sans", sans-serif; fill: #3fa9f0; }
.mark { font: 12px "Liberation Sans", sans-serif; fill: #6a6a6a; }
.view-buttons { position: absolute; top: 10px; right: 11px; display: flex; gap: 10px; }
.nav-bar { position: absolute; top: 27px; right: 3px; background: #3d3d3d; border: 1px solid #4a4a4a; border-width: 0 1px 1px 0; border-radius: 3px; }
.two-d { font: bold 9px "Open Sans", sans-serif; fill: #2c3038; }
.command { position: absolute; left: 61px; right: 61px; bottom: 0; font: 12px/15px "DejaVu Sans Mono", monospace; }
.command ol { display: flex; flex-direction: column; align-items: flex-start; gap: 5px; margin: 0 0 3px 64px; }
.command li { padding: 0 1px; border-radius: 2px; background: #555858; }
.command li:nth-child(1) { background: #3e4042; color: #9c9c9c; }
.command li:nth-child(2) { background: #4b4b4e; color: #c4c8ca; }
.command-line { display: flex; align-items: center; height: 27px; padding-left: 3px; background: #1f262d; border: 1px solid #33393f; border-radius: 2px; }
.command-line button { margin-left: 1px; }
.command-line button + button { margin: 0 8px 0 11px; }
.command-line label { flex: 1; display: flex; align-items: center; align-self: stretch; padding: 0 3px; gap: 2px; background: #b2b2b2; }
.command-line label .wide { border-top-color: #444; }
.command-line input { flex: 1; padding-left: 3px; font-style: italic; }
.command-line input::placeholder { color: #555; opacity: 1; }

/* properties palette */
.palette { flex: 0 0 33%; max-width: 624px; display: flex; flex-direction: column; padding: 2px 0 3px 4px; background: var(--panel); }
.palette h2 { display: flex; gap: 5px; height: 20px; padding-left: 6px; line-height: 17px; background: var(--edge); border-radius: 3px 0 0 0; }
.palette h2::before { content: ""; width: 3px; height: 10px; margin-top: 6px; background: repeating-linear-gradient(#b8bcc2 0 1px, transparent 1px 3px); }
.palette-body { flex: 1; padding: 12px 11px 0 5px; border-bottom: 1px solid var(--edge); }
.selection { display: flex; align-items: center; gap: 8px; margin-bottom: 3px; }
.selection .combo { flex: 1; height: 23px; margin-right: 1px; padding-left: 3px; }
.palette section { margin: 0 8px 2px 5px; }
.palette h3 { display: flex; justify-content: space-between; align-items: center; height: 20px; padding: 0 7px; background: var(--edge); font-weight: bold; color: #fff; }
.palette table { width: calc(100% - 17px); margin-left: 17px; border-collapse: collapse; table-layout: fixed; }
.palette tr { height: 19px; }
.palette th, .palette td { height: 19px; padding: 0 0 0 6px; border: 1px solid var(--edge); font-weight: normal; text-align: left; line-height: 15px; }
.palette th { width: 273px; color: #d2d5da; }
.palette td { padding-left: 3px; }
.palette .off { color: #8c93a0; }
.palette td .swatch, .palette td .sample { display: inline-block; vertical-align: middle; margin-right: 6px; }
.palette td .sample { width: 66px; margin-right: 4px; }

/* layout tabs and status bar */
.layout-bar { display: flex; justify-content: space-between; height: 34px; border-top: 4px solid var(--panel); border-bottom: 1px solid #4a4a4a; }
.layout-tabs { height: 25px; padding-left: 16px; }
.layout-tabs a { padding: 0 9px; line-height: 24px; }
.layout-tabs .active { margin-left: 9px; padding: 0 17px 0 18px; background: var(--panel); font-weight: bold; clip-path: polygon(10px 0, 100% 0, calc(100% - 10px) 100%, 0 100%); }
.layout-tabs a + a { padding-left: 8px; }
.status { display: flex; gap: 2px; padding: 2px 1px 0 0; }
.grp { display: flex; height: 24px; background: var(--panel); }
.grp button { width: 24px; justify-content: center; }
.grp .drop { width: 17px; }
.grp .lit { background: #5b8ec4; border: solid var(--panel); border-width: 0 1px; }
.grp .text { width: auto; padding: 0 3px; gap: 4px; font-size: 12px; }
.grp.loose button { width: 29px; }

/* taskbar */
.taskbar { display: grid; grid-template-columns: 1fr auto 1fr; height: 47px; background: #212121; font-size: 12px; }
.apps { grid-column: 2; display: flex; align-items: center; padding-bottom: 2px; }
.apps button { position: relative; width: 44px; height: 44px; justify-content: center; }
.run::after { content: ""; position: absolute; left: 19px; bottom: 3px; width: 6px; height: 3px; border-radius: 2px; background: #8d9296; }
.now { border-radius: 4px; }
.apps .now { background: #2d2e34; }
.now::after { left: 14px; width: 16px; background: #3cb8f8; }
.app-a { font: bold 12px "Open Sans", sans-serif; fill: #fff; }
.app-lt { font: bold 5px "Open Sans", sans-serif; fill: #fff; }
.find { display: flex; align-items: center; gap: 10px; width: 220px; height: 32px; margin: 0 2px 0 3px; padding: 0 12px; border-radius: 16px; border-top: 1px solid #555; background: #3f4142; font-size: 13px; }
.find input { flex: 1; min-width: 0; appearance: none; }
.find input::placeholder { color: #d0d0d0; opacity: 1; }
.tray { grid-column: 3; display: flex; align-items: center; justify-content: flex-end; gap: 18px; padding: 0 19px 2px 0; }
.system { gap: 7px; }
.clock { display: flex; flex-direction: column; align-items: flex-end; width: 55px; line-height: 16px; font-size: 11px; }
```
